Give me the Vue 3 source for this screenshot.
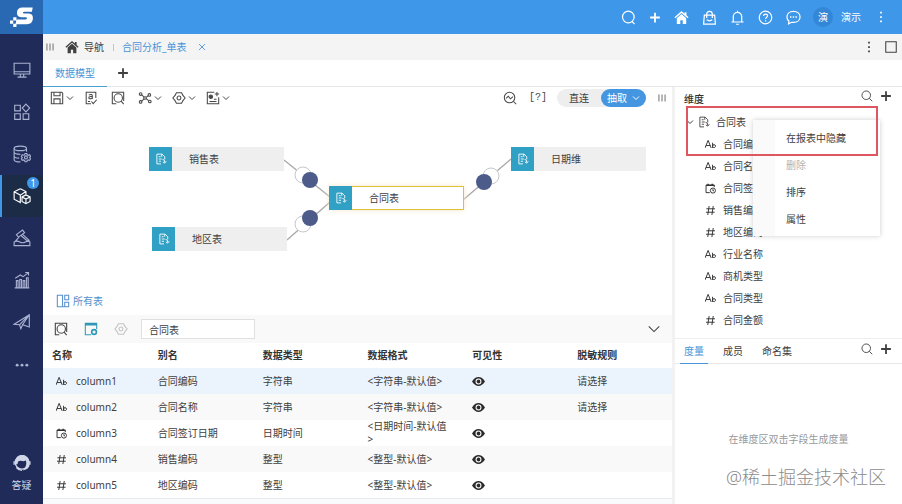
<template>
  <div class="app">
    <nav class="sidebar" aria-label="主菜单">
      <a class="logo" href="#" aria-label="首页">
        <Icon name="logo" />
      </a>
      <div class="side-list">
        <button
          v-for="item in sideItems"
          :key="item.icon"
          type="button"
          class="side-item"
          :class="{ active: item.icon === activeSide }"
          :aria-label="item.label"
          @click="activeSide = item.icon"
        >
          <Icon :name="item.icon" />
          <span v-if="item.badge" class="badge">{{ item.badge }}</span>
        </button>
      </div>
      <button type="button" class="side-help">
        <Icon name="headset" />
        <span>答疑</span>
      </button>
    </nav>

    <div class="page">
      <header class="topbar">
        <div class="top-icons">
          <button v-for="name in topIcons" :key="name" type="button" :aria-label="name">
            <Icon :name="name" />
          </button>
        </div>
        <span class="avatar">演</span>
        <span class="user">演示</span>
        <button type="button" class="top-more" aria-label="更多"><Icon name="dots" /></button>
      </header>

      <div class="tabbar">
        <button type="button" class="grip" aria-label="菜单"><Icon name="bars" /></button>
        <a class="nav-home" href="#"><Icon name="home" />导航</a>
        <span class="sep"></span>
        <a class="page-tab" href="#">合同分析_单表</a>
        <button type="button" class="tab-close" aria-label="关闭"><Icon name="close" /></button>
        <div class="tabbar-right">
          <button type="button" aria-label="更多"><Icon name="dots" /></button>
          <button type="button" aria-label="最大化"><Icon name="square" /></button>
        </div>
      </div>

      <div class="model-tabs">
        <button type="button" class="model-tab">数据模型</button>
        <button type="button" class="add-tab" aria-label="新增"><Icon name="plus" /></button>
      </div>

      <div class="body">
        <main class="workspace">
          <div class="toolbar">
            <button type="button" class="drop" aria-label="保存"><Icon name="save" /><Icon name="chevron" class="small" /></button>
            <button type="button" aria-label="校验"><Icon name="check" /></button>
            <button type="button" aria-label="预览"><Icon name="preview" /></button>
            <button type="button" class="drop" aria-label="关系"><Icon name="relation" /><Icon name="chevron" class="small" /></button>
            <button type="button" class="drop" aria-label="设置"><Icon name="gear" /><Icon name="chevron" class="small" /></button>
            <button type="button" class="drop" aria-label="新建报表"><Icon name="report" /><Icon name="chevron" class="small" /></button>
            <div class="toolbar-right">
              <button type="button" aria-label="血缘"><Icon name="lens" /></button>
              <button type="button" class="hint">[?]</button>
              <div class="mode">
                <button type="button" class="mode-direct">直连</button>
                <button type="button" class="mode-extract">抽取<Icon name="chevron" class="small" /></button>
              </div>
              <button type="button" class="grip" aria-label="收起"><Icon name="bars" /></button>
            </div>
          </div>

          <div class="canvas">
            <svg class="links" aria-hidden="true">
              <g v-for="link in links" :key="link.id">
                <line :x1="link.from[0]" :y1="link.from[1]" :x2="link.to[0]" :y2="link.to[1]" stroke="#a8a8a8" stroke-width="1.3" />
                <circle :cx="link.open[0]" :cy="link.open[1]" r="8" fill="#fff" stroke="#c4c8cc" />
                <circle :cx="link.solid[0]" :cy="link.solid[1]" r="8" fill="#4c5b8a" />
              </g>
            </svg>
            <div
              v-for="node in nodes"
              :key="node.name"
              class="node"
              :class="{ selected: node.selected }"
              :style="{ left: node.x + 'px', top: node.y + 'px' }"
            >
              <span class="node-icon"><Icon name="sheet" /></span>
              <span class="node-name">{{ node.name }}</span>
            </div>
          </div>

          <a class="all-tables" href="#"><Icon name="tables" />所有表</a>

          <div class="detail-bar">
            <button type="button" aria-label="预览"><Icon name="preview" /></button>
            <button type="button" class="teal" aria-label="字段设置"><Icon name="window" /></button>
            <button type="button" class="muted" aria-label="设置"><Icon name="gear" /></button>
            <input v-model="tableName" type="text" aria-label="表名" />
            <button type="button" class="collapse" aria-label="收起"><Icon name="chevron" /></button>
          </div>

          <table class="fields">
            <thead>
              <tr>
                <th v-for="head in heads" :key="head">{{ head }}</th>
              </tr>
            </thead>
            <tbody>
              <tr v-for="(row, i) in rows" :key="row.name" :class="{ current: i === 0 }">
                <td>
                  <div class="field-name"><Icon :name="row.type" /><span>{{ row.name }}</span></div>
                </td>
                <td>{{ row.alias }}</td>
                <td>{{ row.dataType }}</td>
                <td>{{ row.format }}</td>
                <td>
                  <button type="button" class="eye" aria-label="可见"><Icon name="eye" /></button>
                </td>
                <td>
                  <select v-if="row.rule" aria-label="脱敏规则">
                    <option>请选择</option>
                  </select>
                </td>
              </tr>
            </tbody>
          </table>
          <div class="foot"></div>
        </main>

        <aside class="panel">
          <div class="panel-head">
            <span class="panel-title">维度</span>
            <button type="button" aria-label="搜索"><Icon name="search" /></button>
            <button type="button" aria-label="新增"><Icon name="plus" /></button>
          </div>
          <ul class="tree">
            <li class="tree-root"><Icon name="chevron" class="small" /><Icon name="sheet" /><span>合同表</span></li>
            <li v-for="dim in dims" :key="dim.name" class="tree-item">
              <Icon :name="dim.type" /><span>{{ dim.name }}</span>
            </li>
          </ul>
          <div class="measure-tabs">
            <button
              v-for="tab in measureTabs"
              :key="tab"
              type="button"
              class="measure-tab"
              :class="{ active: tab === activeTab }"
              @click="activeTab = tab"
            >{{ tab }}</button>
            <div class="measure-tools">
              <button type="button" aria-label="搜索"><Icon name="search" /></button>
              <button type="button" aria-label="新增"><Icon name="plus" /></button>
            </div>
          </div>
          <p class="empty">在维度区双击字段生成度量</p>

          <div class="menu" role="menu">
            <button type="button" role="menuitem">在报表中隐藏</button>
            <button type="button" role="menuitem" disabled>删除</button>
            <button type="button" role="menuitem">排序</button>
            <button type="button" role="menuitem">属性</button>
          </div>
          <div class="highlight"></div>
          <span class="watermark">@稀土掘金技术社区</span>
        </aside>
      </div>
    </div>
  </div>
</template>

<script setup>
import { h, ref } from 'vue';

const icons = {
  logo: '<path d="M14.6 2.2H8.2Q5.3 2.2 4.9 5 4.6 7.9 7.4 8.1h3q.7 0 .6.8-.1.7-.9.7H4.6L4 12.4h7q3.3 0 3.7-3.2.3-3-2.4-3.3H9.2q-.7 0-.6-.6.1-.5.8-.5h4.7z" fill="currentColor" stroke="none"/><path d="M2.6 8.2h2v2h-2zM.6 10.2h2v2h-2zM2.6 12.2h2v2h-2zM4.6 10.2h2v2h-2z" fill="currentColor" stroke="none"/>',
  monitor: '<path d="M1 2h14v9.5H1zM1 9.5h14M6.5 11.5v2.500M9.500 11.500v2.500M4 14.300h8"/>',
  blocks: '<path d="M1.500 2h5v5h-5zM1.500 9.500h5v5h-5zM9 9.500h5v5H9zM11.500 1l3.300 3.500-3.300 3.500-3.300-3.500z"/>',
  database: '<ellipse cx="6.500" cy="3" rx="5.500" ry="2"/><path d="M1 3v10c0 1.200 2.500 2 5.500 2M12 3v3M1 6.300c0 1.200 2.500 2 5.500 2M1 9.700c0 1.200 2 1.900 4.500 2"/><circle cx="11.500" cy="11" r="1.300"/><path d="M10.700 7.500h1.600l.3 1.200 1 .5 1.200-.5.8 1.400-.9.900.9 1.400-.9 1.300-1.200-.4-1 .5-.2 1.100h-1.600l-.4-1.200-.9-.5-1.200.4-.8-1.400.9-.9-.9-1.200.8-1.400 1.300.4.900-.5z"/>',
  cubes: '<path d="M6.500 1.500l5 2.500v3M6.500 1.500L1 4.300v6.500l5.500 3V7.200M1 4.300l5.500 2.900 5-3.200M11.500 7L8 8.800v4l3.500 2 3.700-2v-4zM8 8.800l3.500 1.900 3.700-1.900M11.500 10.700v4.100"/>',
  gavel: '<path d="M3 5l5.500-4 1.800 2.200-5.500 4zM8.300 4.500l6 5.500-1 1-6-5M5.500 7L2 11M1 11.500q2.500-1.500 5 0t5 0 4 0v3.300H1z"/>',
  chart: '<path d="M1.500 15h13M3 8.500h1.500V15H3zM6 7.500h1.500V15H6zM9 8.500h1.500V15H9zM12 6h1.500v9H12zM2 6.500l4.500-3L9 5l4.500-3.300M10.800 1.300h3v2.700"/>',
  plane: '<path d="M1 10L14.500 1.500v11L8.500 10.500 7 14l-1.200-3.600zM6 10.300l8.500-8.800-6 9"/>',
  more: '<g fill="currentColor" stroke="none"><circle cx="3.700" cy="9" r="1.300"/><circle cx="8" cy="9" r="1.300"/><circle cx="12.300" cy="9" r="1.300"/></g>',
  headset: '<circle cx="8" cy="7.500" r="6"/><path d="M3.500 9C3.300 5.500 6 5 8.500 5.700c1.500.2 2.500-.7 2.700-1.700 2 2.500 1.500 7-.7 9.500 3-.8 4.500-3.500 3.500-7C13 2 9 .8 6 2 3.200 3 2 6 3.500 9z" fill="currentColor"/><path d="M1 6.500v3M15 6.500v3M3 12q2 2.500 5 2.500"/>',
  search: '<circle cx="7" cy="7" r="5.700"/><path d="M11 11l4 4"/>',
  topsearch: '<circle cx="7.800" cy="7.500" r="6.200"/><path d="M11.500 12l3 3"/>',
  plus: '<path d="M8 1.500v13M1.500 8h13" stroke-width="2.400"/>',
  home: '<path d="M8 1L.5 7.700l1 1.100L8 3.200l6.500 5.600 1-1.100-2.200-2V2.300h-2v1.600z" fill="currentColor" stroke="none"/><path d="M8 4.300L3 8.700V15h3.700v-4h2.600v4H13V8.700z" fill="currentColor" stroke="none"/>',
  bag: '<path d="M2.500 5.500h11l.8 9.500H1.700zM5 8.500V4.500a3 3 0 0 1 6 0v4M5 10.500q3 2 6 0"/>',
  bell: '<path d="M1.500 12.800h13M3.500 12.500V7a4.500 4.500 0 0 1 9 0v5.500M8 .8v1.700M6.500 15.200h3"/>',
  help: '<circle cx="8" cy="8" r="6.700"/><path d="M5.900 6.500C5.900 3.600 10.200 3.700 10.200 6.200c0 1.600-2.100 1.800-2.100 3.400M8.100 10.900v1.300"/>',
  chat: '<path d="M8 1.500c4.200 0 7 2.600 7 5.900s-2.800 5.900-7 5.900q-1 0-2-.2L2.700 14.800l.4-3Q1 10 1 7.400c0-3.300 2.800-5.900 7-5.900z"/><path d="M4.300 7.500h1.500M7.200 7.500h1.500M10.100 7.500h1.500" stroke-width="1.700"/>',
  dots: '<path d="M7 2h2v2H7zM7 7h2v2H7zM7 12h2v2H7z" fill="currentColor" stroke="none"/>',
  bars: '<path d="M4.500 4v8M8 4v8M11.500 4v8"/>',
  close: '<path d="M4 4l8 8M12 4l-8 8"/>',
  square: '<path d="M2 2h12v12H2z"/>',
  chevron: '<path d="M2 5l6 6 6-6"/>',
  save: '<path d="M1.500 1.500h12l1 1v12h-13zM4.500 1.500V5.500h7V1.500M4.500 14V9h7V14"/>',
  check: '<path d="M8 14.500H2.500v-13h11V8M8.500 12l2 2.500 4-4.500M4.500 12h2.500"/><path d="M5.500 4.500q4-1.500 4 1V9M9.500 6.500q-4-.5-4 1.200c0 1.800 3 1.600 4 0"/>',
  preview: '<path d="M6 14.500H1.500v-13h13v10"/><circle cx="8.300" cy="8" r="4.800"/><path d="M11.500 11.500l3 3.500"/>',
  relation: '<circle cx="3" cy="3.500" r="1.500"/><circle cx="13" cy="4.500" r="1.500"/><circle cx="3" cy="12.500" r="1.500"/><circle cx="13.500" cy="12" r="1.500"/><circle cx="8" cy="8" r="1.500"/><path d="M4.300 4.500L7 7M9.400 7.400l2.300-2M4.200 11.500L7 9M9.400 8.800l2.800 2.300"/>',
  gear: '<path d="M5 2h6l1.300 2.700L15 8l-2.700 3.300L11 14H5l-1.300-2.700L1 8l2.700-3.300z"/><circle cx="8" cy="8" r="2.200"/>',
  report: '<path d="M9.500 1.500h-8v13h13V7M12.500 1v5M10 3.500h5M4 12h8M9 9.500h3"/><circle cx="5.500" cy="6.500" r="2" fill="currentColor"/>',
  lens: '<circle cx="7.500" cy="7.500" r="6"/><path d="M12 12l3 3M3.500 8.500L6 6l2.500 3L11.500 6.500"/>',
  sheet: '<path d="M8 14.500H2.500v-13h7L13 5v3.500M9 1.500V5M5 5h2.500M5 8h4M5 11h3M10 8.500q3.500 0 3 4M15 11l-2 2.500-2.500-1.500"/>',
  tables: '<path d="M1.500 1.500h6v13h-6zM10 1.500h4.500v5H10zM10 9.500h4.500v5H10zM1.500 14.500h13"/>',
  window: '<path d="M8 14.500H1.500v-13h13V8M1.500 2.500h13M1.500 3.500h13"/><circle cx="11.500" cy="11.500" r="2.700" stroke-width="1.900"/>',
  eye: '<path d="M0 8q3.500-5.500 8-5.500T16 8q-3.500 5.500-8 5.500T0 8z" fill="currentColor" stroke="none"/><circle cx="8" cy="8" r="3" stroke="#fff" stroke-width="1.300"/>',
  text: '<path d="M0 13L4.500 2 9 13M1.500 9.500h6M11 5.500V13M11 10.300c0-2.800 4.300-2.800 4.300 0S11 13.300 11 10.300"/>',
  number: '<path d="M6 1.500L4 14.500M12 1.500l-2 13M2 5.500h12.500M1.500 10.500H14"/>',
  date: '<path d="M7 14H1.500V3h12v3"/><path d="M1.500 3.500h12M4.500 1v3M10.500 1v3" stroke-width="2"/><circle cx="11.500" cy="11" r="3.700"/><path d="M11.500 9v2.300H13"/>',
};

const Icon = (props) =>
  h('svg', {
    class: 'icon',
    viewBox: '0 0 16 16',
    fill: 'none',
    stroke: 'currentColor',
    'aria-hidden': 'true',
    innerHTML: icons[props.name],
  });
Icon.props = ['name'];

const activeSide = ref('cubes');
const sideItems = [
  { icon: 'monitor', label: '门户' },
  { icon: 'blocks', label: '应用' },
  { icon: 'database', label: '数据源' },
  { icon: 'cubes', label: '数据模型', badge: 1 },
  { icon: 'gavel', label: '数据加工' },
  { icon: 'chart', label: '分析' },
  { icon: 'plane', label: '发布' },
  { icon: 'more', label: '更多' },
];
const topIcons = ['topsearch', 'plus', 'home', 'bag', 'bell', 'help', 'chat'];

const nodes = [
  { name: '销售表', x: 106, y: 38 },
  { name: '地区表', x: 109, y: 118 },
  { name: '合同表', x: 286, y: 77, selected: true },
  { name: '日期维', x: 468, y: 38 },
];
const links = [
  { id: 1, from: [241, 51], to: [287, 88], open: [260, 66], solid: [267, 71] },
  { id: 2, from: [244, 131], to: [287, 93], open: [260, 115], solid: [267, 109] },
  { id: 3, from: [420, 91], to: [468, 50], open: [448, 67], solid: [441, 73] },
];

const tableName = ref('合同表');
const heads = ['名称', '别名', '数据类型', '数据格式', '可见性', '脱敏规则'];
const rows = [
  { type: 'text', name: 'column1', alias: '合同编码', dataType: '字符串', format: '<字符串-默认值>', rule: true },
  { type: 'text', name: 'column2', alias: '合同名称', dataType: '字符串', format: '<字符串-默认值>', rule: true },
  { type: 'date', name: 'column3', alias: '合同签订日期', dataType: '日期时间', format: '<日期时间-默认值>' },
  { type: 'number', name: 'column4', alias: '销售编码', dataType: '整型', format: '<整型-默认值>' },
  { type: 'number', name: 'column5', alias: '地区编码', dataType: '整型', format: '<整型-默认值>' },
];

const dims = [
  { type: 'text', name: '合同编码' },
  { type: 'text', name: '合同名称' },
  { type: 'date', name: '合同签订日期' },
  { type: 'number', name: '销售编码' },
  { type: 'number', name: '地区编码' },
  { type: 'text', name: '行业名称' },
  { type: 'text', name: '商机类型' },
  { type: 'text', name: '合同类型' },
  { type: 'number', name: '合同金额' },
];
const measureTabs = ['度量', '成员', '命名集'];
const activeTab = ref('度量');
</script>

<style>
body {
  margin: 0;
}
</style>

<style scoped>
.app {
  display: flex;
  min-height: 100vh;
  background: #fff;
  color: #404040;
  font-family: "Noto Sans", "Noto Sans CJK SC", sans-serif;
  font-size: 10px;
  line-height: 14px;
}

button,
input,
select {
  margin: 0;
  padding: 0;
  border: 0;
  background: none;
  color: inherit;
  font: inherit;
}

button {
  display: flex;
  align-items: center;
  justify-content: center;
  cursor: pointer;
}

a {
  color: inherit;
  text-decoration: none;
}

.icon {
  display: block;
  flex: none;
  width: 14px;
  height: 14px;
  stroke-width: 1.2;
}

.icon.small {
  width: 8px;
  height: 8px;
  stroke-width: 2;
}

/* sidebar */
.sidebar {
  display: flex;
  flex-direction: column;
  flex: none;
  width: 43px;
  background: #212b59;
  color: #a9b2d0;
}

.logo {
  display: flex;
  align-items: center;
  justify-content: center;
  height: 34px;
  background: #2968b2;
  color: #fff;
}

.logo .icon {
  width: 26px;
  height: 26px;
}

.side-list {
  flex: 1;
  padding-top: 15px;
}

.side-item {
  position: relative;
  width: 100%;
  height: 42px;
}

.side-item .icon {
  width: 18px;
  height: 18px;
  stroke-width: 1;
}

.side-item.active {
  background: #1d2c46;
  box-shadow: inset 2px 0 #3e97e9;
  color: #fff;
}

.badge {
  position: absolute;
  top: 2px;
  right: 4px;
  width: 12px;
  height: 12px;
  border-radius: 6px;
  background: #3e97e9;
  color: #fff;
  line-height: 12px;
}

.side-help {
  flex-direction: column;
  gap: 6px;
  padding-bottom: 12px;
  color: #d0d6e8;
}

.side-help .icon {
  width: 18px;
  height: 18px;
}

.page {
  display: flex;
  flex: 1;
  flex-direction: column;
  min-width: 0;
}

/* top bar */
.topbar {
  display: flex;
  align-items: center;
  justify-content: flex-end;
  height: 34px;
  padding-right: 13px;
  background: #3e97e9;
  color: #fff;
}

.top-icons {
  display: flex;
  justify-content: space-between;
  width: 180px;
  margin-right: 12px;
}

.top-icons .icon {
  width: 15px;
  height: 15px;
  stroke-width: 1.3;
}

.top-icons button:nth-child(2) .icon {
  width: 12px;
}

.avatar {
  width: 20px;
  margin-right: 8px;
  border-radius: 10px;
  background: #3486d6;
  line-height: 20px;
  text-align: center;
}

.user {
  margin-right: 12px;
}

.top-more .icon {
  width: 16px;
}

.tabbar {
  display: flex;
  align-items: center;
  height: 26px;
  padding: 0 4px 0 0;
  background: #f4f4f4;
}

.grip .icon {
  width: 14px;
  height: 14px;
  color: #777;
}

.nav-home {
  display: flex;
  align-items: center;
  gap: 5px;
  margin-left: 8px;
}

.sep {
  width: 1px;
  height: 7px;
  margin: 0 8px 0 9px;
  background: #c4c4c4;
}

.page-tab,
.tab-close {
  color: #4a94d8;
}

.tab-close {
  margin-left: 10px;
}

.tab-close .icon {
  width: 12px;
  height: 12px;
}

.tabbar-right {
  display: flex;
  gap: 8px;
  margin-left: auto;
}

.model-tabs {
  display: flex;
  height: 26px;
  border-bottom: 1px solid #e4e6e8;
}

.model-tab {
  width: 64px;
  margin-bottom: -1px;
  border-bottom: 1px solid #4a9fd0;
  color: #4a94d8;
}

.add-tab {
  margin-left: 10px;
}

.add-tab .icon {
  width: 12px;
  height: 12px;
}

.body {
  display: flex;
  flex: 1;
}

.workspace {
  display: flex;
  flex: 1;
  flex-direction: column;
  min-width: 0;
  border-right: 3px solid #f2f2f2;
}

.toolbar {
  display: flex;
  align-items: center;
  gap: 13px;
  height: 22px;
  padding: 0 3px 0 7px;
  color: #484848;
}

.drop {
  gap: 2px;
  margin-right: -3px;
}

.toolbar-right {
  display: flex;
  align-items: center;
  gap: 12px;
  margin-left: auto;
}

.hint {
  font-family: "Liberation Mono", monospace;
}

.mode {
  display: flex;
  margin-left: -2px;
  border-radius: 9px;
  background: #eee;
  color: #404040;
}

.mode-direct {
  width: 44px;
  height: 18px;
}

.mode-extract {
  gap: 5px;
  width: 45px;
  height: 18px;
  border-radius: 9px;
  background: #4596e0;
  color: #fff;
}

.mode + .grip {
  margin-left: -3px;
}

/* model canvas */
.canvas {
  position: relative;
  flex: 1;
  min-height: 150px;
}

.links {
  position: absolute;
  inset: 0;
  width: 100%;
  height: 100%;
}

.node {
  position: absolute;
  display: flex;
  width: 135px;
  height: 24px;
  background: #efefef;
}

.node-icon {
  display: flex;
  align-items: center;
  justify-content: center;
  width: 23px;
  background: #30a0c4;
  color: #fff;
}

.node-icon .icon,
.tree-root .icon:not(.small) {
  width: 12px;
  height: 12px;
}

.node-name {
  padding-left: 17px;
  line-height: 24px;
}

.node.selected {
  background: #fff;
  box-shadow: inset 0 0 0 1px #dcc232, 0 0 6px #f6e9cc;
}

.all-tables {
  display: flex;
  align-items: center;
  align-self: flex-start;
  gap: 3px;
  height: 28px;
  padding-left: 13px;
  color: #5590cc;
}

/* field list */
.detail-bar {
  display: flex;
  align-items: center;
  gap: 16px;
  height: 28px;
  padding: 0 11px;
  background: #f9f9f9;
}

.teal {
  color: #3199b5;
}

.muted {
  color: #c2c2c2;
}

.detail-bar input {
  box-sizing: border-box;
  width: 114px;
  height: 20px;
  margin-left: -3px;
  padding: 0 7px;
  border: 1px solid #e0e0e0;
  background: #fff;
}

.collapse {
  margin-left: auto;
}

.fields {
  width: 100%;
  border-collapse: collapse;
  table-layout: fixed;
}

.fields th,
.fields td {
  height: 26px;
  padding: 0 12px 0 10px;
  line-height: 13px;
  text-align: left;
}

.fields th {
  height: 25px;
  color: #333;
}

.fields th:first-child {
  padding-left: 9px;
}

.fields tbody tr:nth-child(even) {
  background: #f9f9f9;
}

.fields tbody tr.current {
  background: #ebf3fd;
}

.field-name {
  display: flex;
  align-items: center;
  gap: 9px;
  padding-left: 3px;
}

.field-name .icon,
.tree-item .icon {
  width: 11px;
  height: 11px;
  color: #333;
  stroke-width: 1.4;
}

.fields select {
  appearance: none;
}

.eye .icon {
  width: 13px;
  height: 13px;
  color: #2c2c2c;
}

.foot {
  height: 5px;
  border-top: 1px solid #e6ebf0;
  background: #f8fafc;
}

/* dimension panel */
.panel {
  position: relative;
  flex: none;
  width: 227px;
}

.panel-head {
  display: flex;
  align-items: flex-start;
  gap: 7px;
  box-sizing: border-box;
  height: 24px;
  padding: 3px 10px 0 9px;
}

.panel-title {
  margin: 2px auto 0 0;
  color: #333;
  font-weight: 500;
}

.panel-head .icon,
.measure-tools .icon {
  width: 12px;
  height: 12px;
}

.tree {
  margin: 0;
  padding: 0 0 7px;
  list-style: none;
}

.tree li {
  display: flex;
  align-items: center;
  height: 22px;
}

.tree-root {
  gap: 4px;
  padding-left: 11px;
}

.tree-root span {
  margin-left: 2px;
}

.tree-item {
  gap: 7px;
  padding-left: 30px;
}

.measure-tabs {
  display: flex;
  height: 24px;
  padding: 0 10px 0 5px;
  border-top: 1px solid #eee;
  border-bottom: 1px solid #e8e8e8;
}

.measure-tab {
  margin-right: 11px;
  padding: 0 4px;
  border-bottom: 1px solid transparent;
}

.measure-tab.active {
  margin-bottom: -1px;
  border-color: #4a94d8;
  color: #4a94d8;
}

.measure-tools {
  display: flex;
  gap: 7px;
  margin-left: auto;
  padding-bottom: 4px;
}

.empty {
  margin: 68px 0 0;
  color: #999;
  text-align: center;
}

.menu {
  position: absolute;
  top: 33px;
  right: 22px;
  box-sizing: border-box;
  width: 127px;
  padding: 4px 0;
  background: linear-gradient(to right, #fafafa 22px, #fff 22px);
  box-shadow: 0 0 5px rgba(0, 0, 0, 0.2);
}

.menu button {
  justify-content: flex-start;
  width: 100%;
  height: 27px;
  padding-left: 33px;
}

.menu button:disabled {
  color: #b4b4b4;
}

.highlight {
  position: absolute;
  top: 19px;
  right: 24px;
  left: 11px;
  box-sizing: border-box;
  height: 50px;
  border: 2px solid #de5660;
  pointer-events: none;
}

.watermark {
  position: absolute;
  right: 16px;
  bottom: 15px;
  color: #8c8c8c;
  font-size: 18px;
  font-weight: 300;
  line-height: 24px;
  white-space: nowrap;
}
</style>
